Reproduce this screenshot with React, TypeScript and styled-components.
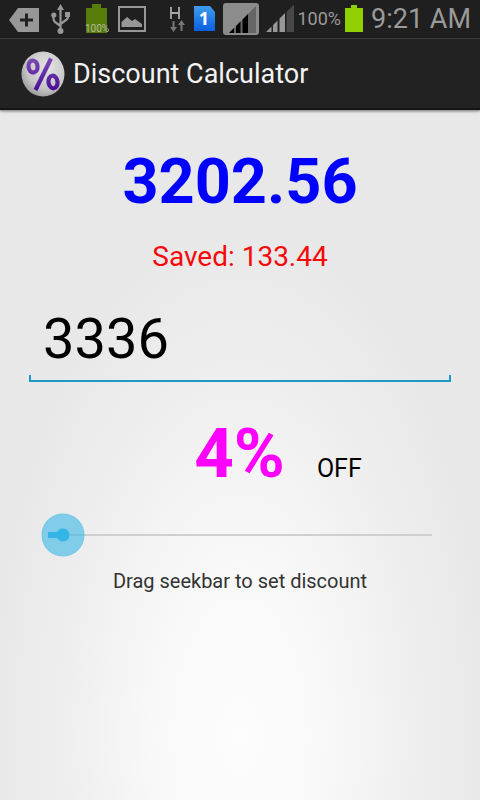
import React, { useState } from "react";
import styled, { createGlobalStyle } from "styled-components";

const GlobalStyle = createGlobalStyle`
  *, *::before, *::after { box-sizing: border-box; }
  body { margin: 0; background: #e8e8e8; font-family: Roboto, sans-serif; }
`;

const Screen = styled.div`
  min-height: 100vh;
  display: flex;
  flex-direction: column;
  background: radial-gradient(ellipse 52% 64% at 50% 92%, #fdfdfd 0, #f8f8f8 36%, #efefef 68%, #e8e8e8 100%);
`;

const StatusBar = styled.header`
  height: 38px;
  flex: none;
  display: flex;
  align-items: center;
  justify-content: space-between;
  padding: 0 9px 0 8px;
  background: #1f1f1f;
  color: #9a9a9a;
`;

const StatusGroup = styled.div`
  display: flex;
  align-items: center;
`;

const StatusIcon = styled.svg<{ $w: number; $gap?: number }>`
  display: block;
  flex: none;
  width: ${(p) => p.$w}px;
  height: 38px;
  margin-right: ${(p) => p.$gap ?? 0}px;
`;

const BatteryLevel = styled.span`
  font-size: 18px;
  line-height: 40px;
  margin-right: 4px;
`;

const Clock = styled.time`
  font-size: 27px;
  line-height: 38px;
  white-space: nowrap;
`;

const ActionBar = styled.div`
  height: 72px;
  flex: none;
  display: flex;
  align-items: center;
  gap: 8px;
  padding: 1px 21px 0;
  background: #222;
  border-top: 1px solid #3a3a3a;
  border-bottom: 2px solid #151515;
  box-shadow: 0 1px 3px rgba(0, 0, 0, 0.55);
`;

const Logo = styled.svg`
  width: 44px;
  height: 46px;
  flex: none;
`;

const Title = styled.h1`
  margin: 0;
  color: #f3f3f3;
  font-size: 27px;
  line-height: 36px;
  font-weight: 400;
`;

const Content = styled.main`
  display: flex;
  flex-direction: column;
  padding: 34px 29px 0;
`;

const Total = styled.output`
  display: block;
  text-align: center;
  color: #0000fe;
  font-size: 63px;
  line-height: 76px;
  font-weight: 700;
`;

const Saved = styled.p`
  margin: 19px 0 0;
  text-align: center;
  color: #f50a0a;
  font-size: 28px;
  line-height: 36px;
`;

const Field = styled.div`
  position: relative;
  margin-top: 25px;
  border-bottom: 2px solid #1c9ac4;

  &::before, &::after {
    content: "";
    position: absolute;
    bottom: 0;
    width: 2px;
    height: 5px;
    background: #1c9ac4;
  }
  &::before { left: 0; }
  &::after { right: 0; }
`;

const PriceInput = styled.input`
  display: block;
  width: 100%;
  height: 80px;
  padding: 0 14px 2px;
  border: 0;
  outline: 0;
  background: transparent;
  color: #000;
  font-family: inherit;
  font-size: 56px;
`;

const RateRow = styled.div`
  display: flex;
  align-items: baseline;
  justify-content: center;
  gap: 32px;
  margin-top: 32px;
  padding-left: 76px;
`;

const Rate = styled.output`
  color: #ff00ff;
  font-size: 69px;
  line-height: 80px;
  font-weight: 700;
`;

const Off = styled.span`
  color: #000;
  font-size: 25px;
`;

const Seekbar = styled.input`
  appearance: none;
  display: block;
  height: 44px;
  margin: 19px -3px 0;
  padding: 0;
  outline: 0;
  cursor: pointer;
  background: linear-gradient(#cfcfcf, #cfcfcf) center / calc(100% - 44px) 2px no-repeat;

  &::-webkit-slider-thumb {
    appearance: none;
    width: 44px;
    height: 44px;
    border-radius: 50%;
    background:
      linear-gradient(#33b5e5, #33b5e5) 7px center / 15px 6px no-repeat,
      radial-gradient(circle, #33b5e5 6px, rgba(51, 181, 229, 0.58) 7px, rgba(51, 181, 229, 0.58) 20px, rgba(51, 181, 229, 0.65) 21px, transparent 22px);
  }
`;

const Hint = styled.label`
  margin-top: 12px;
  text-align: center;
  color: #333;
  font-size: 20px;
  line-height: 24px;
`;

function Notifications() {
  return (
    <StatusGroup>
      <StatusIcon $w={32} $gap={11} viewBox="0 0 32 38" aria-label="Input method">
        <path d="M1 20 10 8H31V32H10Z" fill="#979797" />
        <path d="M12 20H25M18.500 13.500V26.500" stroke="#222" strokeWidth="3" />
      </StatusIcon>
      <StatusIcon $w={20} $gap={13} viewBox="0 0 20 38" aria-label="USB">
        <g stroke="#979797" strokeWidth="2.200" fill="none">
          <path d="M9.500 8V31M9.500 26 4 22Q2.500 21 2.500 18V15M9.500 24 15 20Q17 19 17 16V14" />
        </g>
        <path d="M9.500 4 13 10H6ZM14 12H19V17H14Z" fill="#979797" />
        <circle cx="2.800" cy="15" r="2.600" fill="#979797" />
        <circle cx="9.500" cy="31" r="3" fill="#979797" />
      </StatusIcon>
      <StatusIcon $w={26} $gap={7} viewBox="0 0 26 38" aria-label="Battery full">
        <path d="M2 8H8V4H17V8H23V33H2Z" fill="#587c0a" />
        <text x="13" y="32" textAnchor="middle" fontFamily="Roboto, sans-serif" fontSize="10" fill="#b4bea0">
          100%
        </text>
      </StatusIcon>
      <StatusIcon $w={30} viewBox="0 0 30 38" aria-label="Picture">
        <rect x="2" y="7" width="26" height="24" fill="none" stroke="#979797" strokeWidth="2" />
        <path d="M4.500 27V22L10 17 15 21 18 19 25 24V27Z" fill="#979797" />
      </StatusIcon>
    </StatusGroup>
  );
}

function SystemStatus() {
  return (
    <StatusGroup>
      <StatusIcon $w={18} $gap={7} viewBox="0 0 18 38" aria-label="HSPA data">
        <path d="M3 7V19M11 7V19M3 13H11" stroke="#aaa" strokeWidth="1.800" />
        <path d="M5.500 21V29M13.500 31V23" stroke="#777" strokeWidth="2" />
        <path d="M2 27H9L5.500 32ZM10 25H17L13.500 20Z" fill="#777" />
      </StatusIcon>
      <StatusIcon $w={23} $gap={6} viewBox="0 0 23 38" aria-label="SIM 1">
        <defs>
          <linearGradient id="sim" x1="0" y1="0" x2="0" y2="1">
            <stop offset="0" stopColor="#3f9bee" />
            <stop offset="1" stopColor="#0c5fe0" />
          </linearGradient>
        </defs>
        <path d="M1 6H17L22 12V31H1Z" fill="url(#sim)" />
        <text x="11" y="25" textAnchor="middle" fontFamily="Open Sans, sans-serif" fontWeight="700" fontSize="18" fill="#fff">
          1
        </text>
      </StatusIcon>
      <StatusIcon $w={38} $gap={5} viewBox="0 0 38 38" aria-label="Signal SIM 1">
        <rect x="1" y="3" width="36" height="32" rx="3" fill="#8c8c8c" />
        <path d="M7 33 34 6V33Z" fill="#666" />
        <path d="M7 33 12 28V33ZM14 33V26L18.500 21.500V33ZM20.500 33V19.500L26 14V33Z" fill="#000" />
      </StatusIcon>
      <StatusIcon $w={30} $gap={3} viewBox="0 0 30 38" aria-label="Signal SIM 2">
        <path d="M21.500 32V12L29 4.500V32Z" fill="#484848" />
        <path d="M1 32 6.500 26.500V32ZM8 32V25L12.500 20.500V32ZM14.500 32V18.500L20 13V32Z" fill="#979797" />
      </StatusIcon>
      <BatteryLevel>100%</BatteryLevel>
      <StatusIcon $w={18} $gap={8} viewBox="0 0 18 38" aria-label="Battery">
        <path d="M0 8H6V5H12V8H18V32H0Z" fill="#91d000" />
      </StatusIcon>
      <Clock>9:21 AM</Clock>
    </StatusGroup>
  );
}

function AppLogo() {
  return (
    <Logo viewBox="0 0 44 46" aria-hidden="true">
      <defs>
        <radialGradient id="ball" cx="0.600" cy="0.350" r="0.700">
          <stop offset="0" stopColor="#e6e6e6" />
          <stop offset="0.700" stopColor="#c4c4c4" />
          <stop offset="1" stopColor="#999" />
        </radialGradient>
        <linearGradient id="mark" gradientUnits="userSpaceOnUse" x1="0" y1="7" x2="0" y2="40">
          <stop offset="0" stopColor="#7d4bb4" />
          <stop offset="1" stopColor="#4a0d97" />
        </linearGradient>
      </defs>
      <ellipse cx="22" cy="23" rx="21.500" ry="22.500" fill="url(#ball)" />
      <g fill="none" stroke="url(#mark)">
        <ellipse cx="12" cy="15.500" rx="4.500" ry="6" strokeWidth="4.200" transform="rotate(-8 12 15.500)" />
        <ellipse cx="32" cy="31" rx="4.500" ry="6.300" strokeWidth="4.200" transform="rotate(-8 32 31)" />
        <path d="M30 7.500 14.500 39" strokeWidth="4.200" />
      </g>
    </Logo>
  );
}

export default function App() {
  const [price, setPrice] = useState("3336");
  const [rate, setRate] = useState(4);
  const amount = Number(price) || 0;
  const saved = (amount * rate) / 100;

  return (
    <Screen>
      <GlobalStyle />
      <StatusBar>
        <Notifications />
        <SystemStatus />
      </StatusBar>
      <ActionBar>
        <AppLogo />
        <Title>Discount Calculator</Title>
      </ActionBar>
      <Content>
        <Total>{(amount - saved).toFixed(2)}</Total>
        <Saved>Saved: {saved.toFixed(2)}</Saved>
        <Field>
          <PriceInput
            aria-label="Price"
            inputMode="decimal"
            value={price}
            onChange={(e) => setPrice(e.target.value)}
          />
        </Field>
        <RateRow>
          <Rate>{rate}%</Rate>
          <Off>OFF</Off>
        </RateRow>
        <Seekbar
          id="discount"
          type="range"
          min={0}
          max={100}
          value={rate}
          onChange={(e) => setRate(Number(e.target.value))}
        />
        <Hint htmlFor="discount">Drag seekbar to set discount</Hint>
      </Content>
    </Screen>
  );
}
